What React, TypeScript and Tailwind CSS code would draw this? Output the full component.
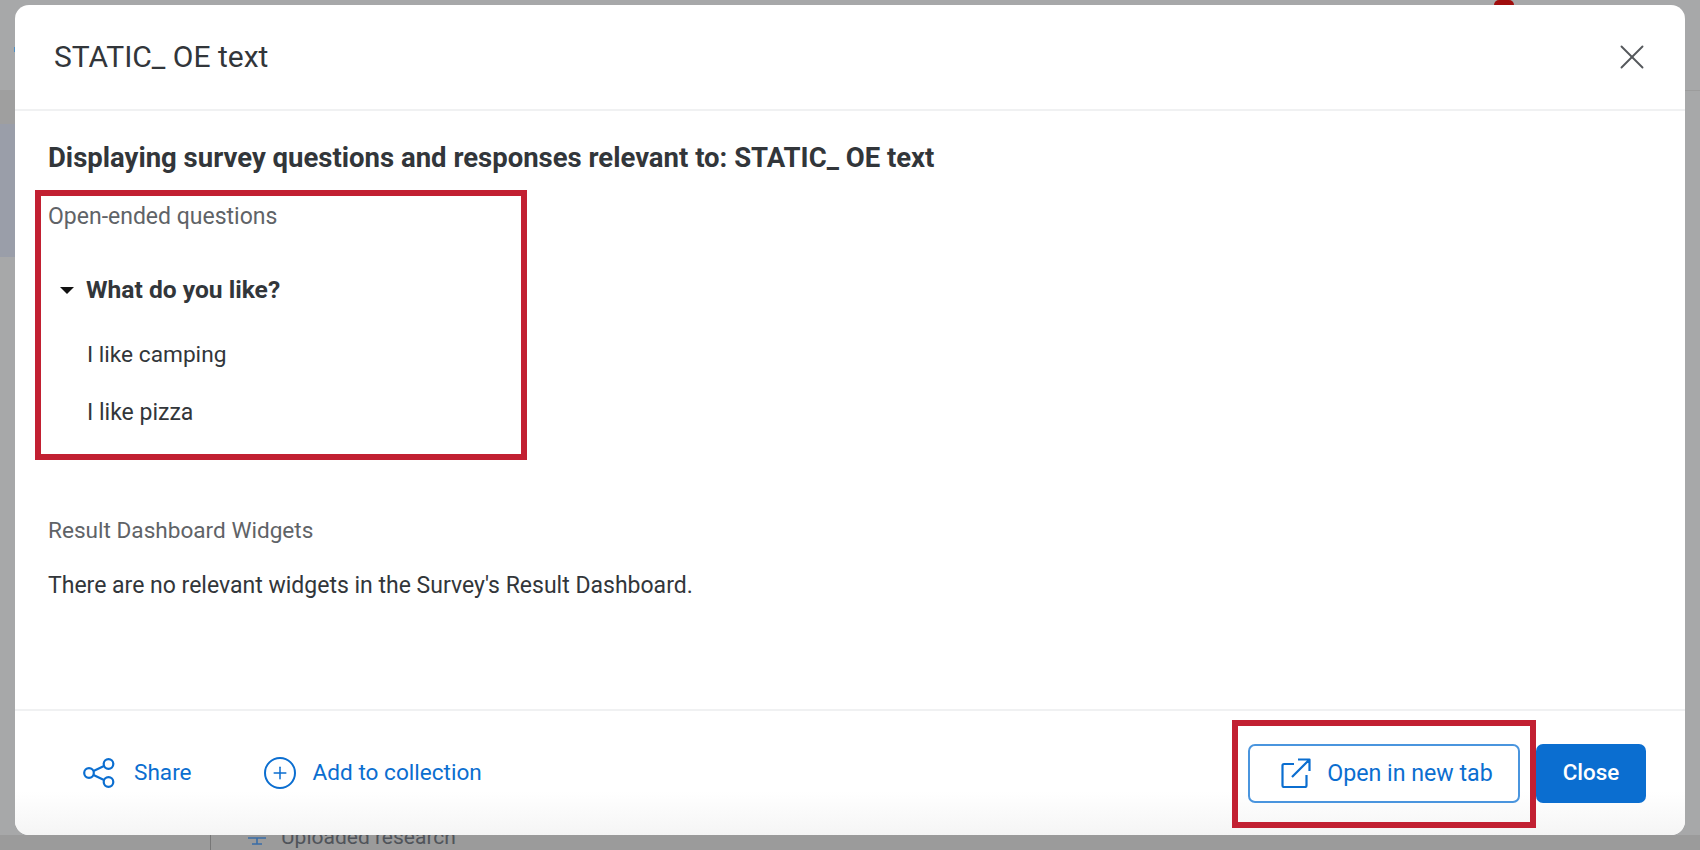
import { Plus, X } from 'lucide-react';

const font = "font-['Roboto','Noto_Sans',sans-serif]";

// Share icon, three nodes
const ShareIcon = () => (
  <svg width="32" height="30" viewBox="0 0 32 30" fill="none" stroke="currentColor" strokeWidth="2.2" className="mr-[19px]">
    <circle cx="6" cy="15" r="4.8" />
    <circle cx="25.5" cy="6" r="4.8" />
    <circle cx="25.5" cy="24" r="4.8" />
    <path d="M10.5 13 21 8M10.5 17 21 22" />
  </svg>
);

const OpenIcon = () => (
  <svg width="30" height="30" viewBox="0 0 30 30" fill="none" stroke="currentColor" strokeWidth="2.2" strokeLinejoin="round" className="mr-[16px]">
    <path d="M13 6H3a1.500 1.500 0 0 0-1.500 1.500V27.500A1.500 1.500 0 0 0 3 29H24a1.500 1.500 0 0 0 1.500-1.500V17" />
    <path d="M11 19 28.500 1.500M17 1.500H28.500V13" />
  </svg>
);

// Modal footer link
const LinkButton = ({ icon, label }: { icon: React.ReactNode; label: string }) => (
  <button className="flex items-center text-[#0b6ed0] text-[22.6px] leading-[30px]">
    {icon}
    {label}
  </button>
);

export default function App() {
  return (
    <div className={`relative w-[1700px] h-[850px] overflow-hidden bg-[#a7a8a9] ${font}`}>
      {/* dimmed page behind the modal */}
      <div className="absolute left-0 top-[90px] w-[15px] h-[34px] bg-[#9f9f9f]" />
      <div className="absolute left-0 top-[124px] w-[15px] h-[133px] bg-[#9a9ea9]" />
      <div className="absolute left-[14px] top-[47px] w-[2px] h-[5px] bg-[#4d8fc4]" />
      <div className="absolute left-[1685px] top-[90px] w-[15px] h-px bg-[#9c9c9c]" />
      <div className="absolute left-0 top-[835px] w-full h-[15px] bg-[#9b9b9b]" />
      <div className="absolute left-[210px] top-[835px] w-px h-[15px] bg-[#777777]" />
      <div className="absolute left-[247px] top-[826px] flex items-center text-[#50545a] text-[21px] leading-[22px]">
        <svg width="20" height="20" viewBox="0 0 20 20" fill="none" stroke="#3a6ea8" strokeWidth="1.600" className="mr-[14px]">
          <path d="M1 11H19M10 11V17M5 17H15" />
        </svg>
        Uploaded research
      </div>

      <div className="absolute left-[15px] top-[5px] w-[1670px] h-[830px] bg-white rounded-[14px] flex flex-col">
        <div className="h-[106px] shrink-0 border-b-2 border-[#f0f1f2] flex items-center justify-between pl-[39px] pr-[32px] pb-[1px]">
          <h1 className="text-[30px] text-[#32363a]">STATIC_ OE text</h1>
          <X size={42} strokeWidth={1.1} className="text-[#55585c]" />
        </div>

        <div className="flex-1 pl-[33px] pt-[30px]">
          <h2 className="text-[27.5px] leading-[34px] font-bold text-[#32363a]">
            Displaying survey questions and responses relevant to: STATIC_ OE text
          </h2>
          <div className="mt-[28px] text-[23px] leading-[28px] text-[#5f6367]">Open-ended questions</div>
          <div className="mt-[45px] flex items-center text-[24.6px] leading-[28px] font-bold text-[#32363a]">
            <span className="ml-[12px] mr-[12px] w-0 h-0 border-x-[7px] border-x-transparent border-t-[7px] border-t-[#111111]" />
            What do you like?
          </div>
          <div className="mt-[37px] ml-[39px] text-[22.7px] leading-[28px] text-[#32363a]">I like camping</div>
          <div className="mt-[30px] ml-[39px] text-[23px] leading-[28px] text-[#32363a]">I like pizza</div>
          <div className="mt-[90px] text-[22.6px] leading-[28px] text-[#5f6367]">Result Dashboard Widgets</div>
          <div className="mt-[27px] text-[23px] leading-[28px] text-[#32363a]">
            There are no relevant widgets in the Survey's Result Dashboard.
          </div>
        </div>

        <div className="h-[126px] shrink-0 rounded-b-[14px] border-t-2 border-[#f0f1f2] bg-linear-to-b from-white from-65% to-[#f5f5f5] flex items-center justify-between pl-[68px] pr-[39px]">
          <div className="flex items-center gap-[72px]">
            <LinkButton label="Share" icon={<ShareIcon />} />
            <LinkButton
              label="Add to collection"
              icon={
                <span className="mr-[17px] w-[32px] h-[32px] rounded-full border-2 border-[#0b6ed0] flex items-center justify-center">
                  <Plus size={20} strokeWidth={1.8} />
                </span>
              }
            />
          </div>
          <div className="flex items-center gap-[16px]">
            <button className="w-[272px] h-[59px] pl-[6px] rounded-[7px] border-2 border-[#4a95de] bg-white text-[#0b6ed0] text-[23.2px] flex items-center justify-center">
              <OpenIcon />
              Open in new tab
            </button>
            <button className="w-[110px] h-[59px] rounded-[7px] bg-[#0b6ed0] text-white text-[22.4px] font-medium">Close</button>
          </div>
        </div>
      </div>

      {/* red callouts */}
      <div className="absolute left-[35px] top-[190px] w-[492px] h-[270px] border-[6px] border-[#c22032]" />
      <div className="absolute left-[1232px] top-[720px] w-[304px] h-[108px] border-[6px] border-[#c22032]" />
      <div className="absolute left-[1494px] top-0 w-[20px] h-[5px] rounded-t-full bg-[#a00d0d]" />
    </div>
  );
}
